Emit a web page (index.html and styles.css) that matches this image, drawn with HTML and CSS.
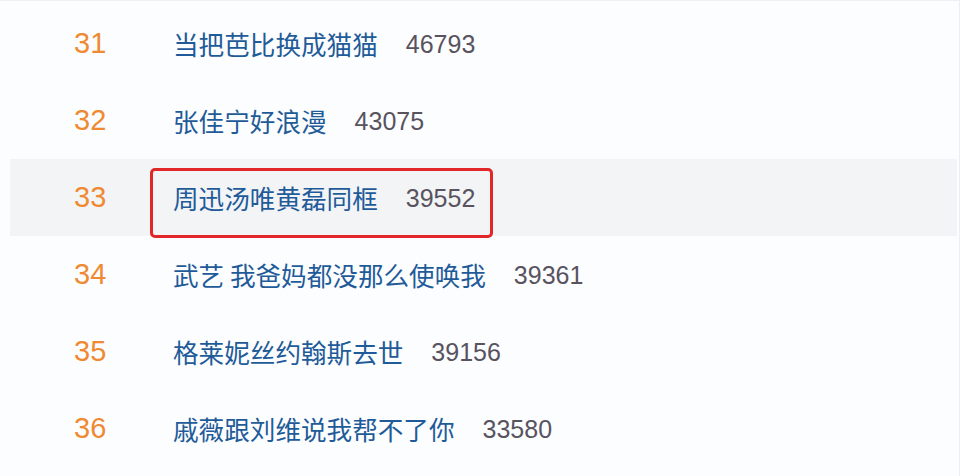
FILE: index.html
```html
<!DOCTYPE html>
<html lang="zh-CN">
<head>
  <meta charset="UTF-8">
  <meta name="viewport" content="width=device-width, initial-scale=1.0">
  <title>热搜榜</title>
  <link rel="stylesheet" href="styles.css">
</head>
<body>
  <div class="hot-list">
    <div class="row">
      <span class="rank">31</span>
      <span class="item"><a class="title" href="#">当把芭比换成猫猫</a><span class="count">46793</span></span>
    </div>
    <div class="row">
      <span class="rank">32</span>
      <span class="item"><a class="title" href="#">张佳宁好浪漫</a><span class="count">43075</span></span>
    </div>
    <div class="row active">
      <span class="rank">33</span>
      <span class="item marked"><a class="title" href="#">周迅汤唯黄磊同框</a><span class="count">39552</span></span>
    </div>
    <div class="row">
      <span class="rank">34</span>
      <span class="item"><a class="title" href="#">武艺 我爸妈都没那么使唤我</a><span class="count">39361</span></span>
    </div>
    <div class="row">
      <span class="rank">35</span>
      <span class="item"><a class="title" href="#">格莱妮丝约翰斯去世</a><span class="count">39156</span></span>
    </div>
    <div class="row">
      <span class="rank">36</span>
      <span class="item"><a class="title" href="#">戚薇跟刘维说我帮不了你</a><span class="count">33580</span></span>
    </div>
  </div>
</body>
</html>
```

FILE: styles.css
```css
body { margin: 0; background: #fcfdfe; font-family: "Liberation Sans", Arial, sans-serif; }
.hot-list { height: 476px; box-sizing: border-box; padding: 4px 2px 0 10px; border-top: 1px solid #eef0f2; border-right: 1px solid #eceff1; }
.row { display: flex; align-items: center; height: 77px; }
.row.active { background: #f2f4f6; }
.rank { width: 163px; box-sizing: border-box; padding-left: 64px; font-size: 29px; color: #ef8a33; }
.item { display: flex; align-items: center; gap: 28px; line-height: 30px; position: relative; }
.title { font-family: "Noto Sans CJK SC", sans-serif; font-size: 25.6px; color: #1f5b99; text-decoration: none; }
.count { font-size: 25px; color: #58535e; }
.marked::after { content: ""; position: absolute; left: -23px; right: -18px; top: -15px; bottom: -25px; border: 3px solid #e1272a; border-radius: 5px; }
```
